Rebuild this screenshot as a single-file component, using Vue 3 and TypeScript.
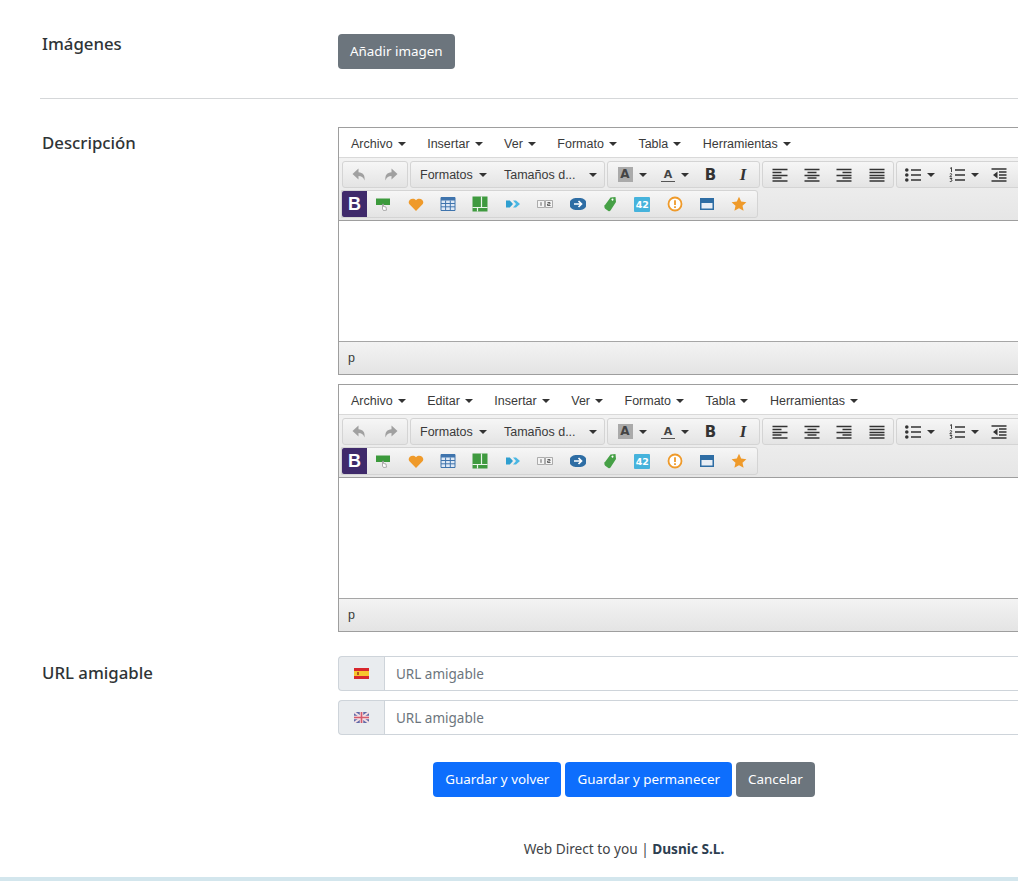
<script setup lang="ts">
interface Shape { d: string; fill?: string; stroke?: string; sw?: number }
interface Tool { w: number; shapes?: Shape[]; text?: string; cls?: string; caret?: boolean }

const g = '#333'
const undo: Shape[] = [{ d: 'M7.500 1.500 1.500 7l6 5.500V9c2.800 0 4.800 1 6 4.500.8-5.200-1.700-8-6-8.200z', fill: '#a0a0a0' }]
const redo: Shape[] = [{ d: 'M8.500 1.500 14.500 7l-6 5.500V9c-2.800 0-4.800 1-6 4.500-.8-5.200 1.700-8 6-8.200z', fill: '#a0a0a0' }]
const left: Shape[] = [{ d: 'M.5 2.500h15M.5 5.500h9M.5 8.500h15M.5 11h9M.5 14h15', stroke: g, sw: 1.500 }]
const center: Shape[] = [{ d: 'M.5 2.500h15M3.500 5.500h9M.5 8.500h15M3.500 11h9M.5 14h15', stroke: g, sw: 1.500 }]
const right: Shape[] = [{ d: 'M.5 2.500h15M6.500 5.500h9M.5 8.500h15M6.500 11h9M.5 14h15', stroke: g, sw: 1.500 }]
const justify: Shape[] = [{ d: 'M.5 2.500h15M.5 5.500h15M.5 8.500h15M.5 11h15M.5 14h15', stroke: g, sw: 1.500 }]
const bullets: Shape[] = [
  { d: 'M0 3a1.800 1.800 0 1 0 3.600 0a1.800 1.800 0 1 0-3.600 0M0 8a1.800 1.800 0 1 0 3.600 0a1.800 1.800 0 1 0-3.600 0M0 13a1.800 1.800 0 1 0 3.600 0a1.800 1.800 0 1 0-3.600 0', fill: g },
  { d: 'M6 3h10M6 8h10M6 13h10', stroke: g, sw: 1.600 }
]
const numbers: Shape[] = [
  { d: 'M1 1.500 2.500.5V5M.8 7c1.500-1 2.500 0 1.500 1L.8 9.800H3M.8 11.500h2.200l-1 1.300c1.500 0 1.500 2.200-1.200 1.700', stroke: g, sw: .9, fill: 'none' },
  { d: 'M6 3h10M6 8h10M6 13h10', stroke: g, sw: 1.600 }
]
const outdent: Shape[] = [
  { d: 'M.5 2h15M8 5h7.500M8 8h7.500M8 11h7.500M.5 14h15', stroke: g, sw: 1.500 },
  { d: 'M6.500 4.500v7L2 8z', fill: g }
]
const indent: Shape[] = [
  { d: 'M.5 2h15M8 5h7.500M8 8h7.500M8 11h7.500M.5 14h15', stroke: g, sw: 1.500 },
  { d: 'M2 4.500v7L6.500 8z', fill: g }
]

const row1: Tool[][] = [
  [{ w: 32, shapes: undo }, { w: 32, shapes: redo }],
  [
    { w: 84, text: 'Formatos', cls: 'drop', caret: true },
    { w: 109, text: 'Tamaños d...', cls: 'drop wide', caret: true }
  ],
  [
    { w: 48, text: 'A', cls: 'hl', caret: true },
    { w: 38, text: 'A', cls: 'fc', caret: true },
    { w: 33, text: 'B', cls: 'bold' },
    { w: 32, text: 'I', cls: 'ital' }
  ],
  [{ w: 33, shapes: left }, { w: 32, shapes: center }, { w: 32, shapes: right }, { w: 33, shapes: justify }],
  [
    { w: 46, shapes: bullets, caret: true },
    { w: 42, shapes: numbers, caret: true },
    { w: 28, shapes: outdent },
    { w: 32, shapes: indent }
  ]
]

const row2: Tool[] = [
  { w: 32.400, shapes: [
    { d: 'M1 2.500h14v6.500H1z', fill: '#3c9a3c' },
    { d: 'M7.500 8v5l1 1.500 3-.3-.5-3.200-2.500-.5V8z', fill: '#fff', stroke: '#8d8d8d', sw: .7 }
  ] },
  { w: 32.400, shapes: [{ d: 'M8 15 1.200 8C-1 4.500 4.500.5 8 4.200c3.500-3.700 9 .3 6.800 3.800z', fill: '#ef9a2a' }] },
  { w: 32.400, shapes: [
    { d: 'M1 1.500h14v13H1z', fill: '#dfe9f5', stroke: '#3f74ad', sw: 1 },
    { d: 'M1 7.500h14M1 10.800h14M5.600 4.500v10M10.300 4.500v10', fill: 'none', stroke: '#3f74ad', sw: 1 },
    { d: 'M1 1.500h14v3H1z', fill: '#3f74ad' }
  ] },
  { w: 32.400, shapes: [
    { d: 'M.5 .5h15v15H.5z', fill: '#3f9a3f' },
    { d: 'M.5 11.500h15M9.500 .5v11M5.500 11.500v4', stroke: '#eaf5ea', sw: 1.200, fill: 'none' }
  ] },
  { w: 32.400, shapes: [
    { d: 'M1 4.500h3.800L8 8l-3.200 3.500H1z', fill: '#2f9fd0' },
    { d: 'M8 4.500h3L15 8l-4 3.500H8L11 8z', fill: '#4bb7e3' }
  ] },
  { w: 32.400, shapes: [
    { d: 'M.5 4.500h7v7h-7zM8.500 4.500h7v7h-7z', fill: '#f4f4f4', stroke: '#9a9a9a', sw: .8 },
    { d: 'M4 6.200v3.600M10.500 6.500h2.500v1.500h-2.500v1.500h3', fill: 'none', stroke: '#555', sw: .9 }
  ] },
  { w: 32.400, shapes: [
    { d: 'M5.500 2h5a6 6 0 0 1 0 12h-5a6 6 0 0 1 0-12z', fill: '#2e6da4' },
    { d: 'M4 8h7M8.500 5l3 3-3 3', fill: 'none', stroke: '#fff', sw: 1.700 }
  ] },
  { w: 32.400, shapes: [
    { d: 'M3 9 8.500 1.500l5-.5.5 5-5.500 8.500c-.6.800-1.400.9-2.100.5l-3.200-2.300c-.8-.6-1-2-.7-3.700z', fill: '#46a046' },
    { d: 'M11.500 3.500a1 1 0 1 0 0 .1', fill: '#fff' }
  ] },
  { w: 32.400, text: '42', cls: 'badge' },
  { w: 32.400, shapes: [
    { d: 'M8 1.500a6.500 6.500 0 1 0 0 13a6.500 6.500 0 1 0 0-13z', fill: '#fff', stroke: '#ef9a2a', sw: 1.800 },
    { d: 'M8 4.300v4.700M8 10.200v1.800', fill: 'none', stroke: '#ef9a2a', sw: 1.800 }
  ] },
  { w: 32.400, shapes: [
    { d: 'M1 2h14v12H1z', fill: '#2e6da4' },
    { d: 'M2.500 7h11v5.500h-11z', fill: '#e8eef5' }
  ] },
  { w: 32.400, shapes: [{ d: 'M8 .8l2.200 4.800 5.200.6-3.900 3.500 1.100 5.100L8 12.200l-4.600 2.600 1.100-5.100L.6 6.200l5.200-.6z', fill: '#ef9a2a' }] }
]

const editors = [
  { id: 'es', menus: ['Archivo', 'Insertar', 'Ver', 'Formato', 'Tabla', 'Herramientas'] },
  { id: 'en', menus: ['Archivo', 'Editar', 'Insertar', 'Ver', 'Formato', 'Tabla', 'Herramientas'] }
]
</script>

<template>
  <div class="page">
    <main class="main">
      <section class="row first">
        <h2 class="label">Imágenes</h2>
        <div><button class="btn grey" type="button">Añadir imagen</button></div>
      </section>
      <hr class="rule" />
      <section class="row desc">
        <h2 class="label">Descripción</h2>
        <div class="editors">
          <div v-for="ed in editors" :key="ed.id" class="editor">
            <nav class="menubar">
              <span v-for="m in ed.menus" :key="m" class="menu">{{ m }}<i class="caret"></i></span>
            </nav>
            <div class="toolbar">
              <div class="tool-row top">
                <div v-for="(grp, gi) in row1" :key="gi" class="group">
                  <span v-for="(t, ti) in grp" :key="ti" class="tool" :style="{ width: t.w + 'px' }">
                    <svg v-if="t.shapes" class="ico" viewBox="0 0 16 16">
                      <path v-for="(s, si) in t.shapes" :key="si" :d="s.d" :fill="s.fill || 'none'" :stroke="s.stroke" :stroke-width="s.sw" />
                    </svg>
                    <span v-if="t.text" :class="t.cls">{{ t.text }}</span>
                    <i v-if="t.caret" class="caret"></i>
                  </span>
                </div>
              </div>
              <div class="tool-row">
                <div class="group second">
                  <span class="logo">B</span>
                  <span v-for="(t, ti) in row2" :key="ti" class="tool" :style="{ width: t.w + 'px' }">
                    <svg v-if="t.shapes" class="ico" viewBox="0 0 16 16">
                      <path v-for="(s, si) in t.shapes" :key="si" :d="s.d" :fill="s.fill || 'none'" :stroke="s.stroke" :stroke-width="s.sw" />
                    </svg>
                    <span v-if="t.text" :class="t.cls">{{ t.text }}</span>
                  </span>
                </div>
              </div>
            </div>
            <div class="area"></div>
            <div class="status">p</div>
          </div>
        </div>
      </section>
      <section class="row url">
        <h2 class="label">URL amigable</h2>
        <div class="inputs">
          <div class="input-group">
            <span class="addon">
              <svg class="flag" viewBox="0 0 15 11">
                <path d="M0 0h15v11H0z" fill="#d8262c" />
                <path d="M0 3h15v5H0z" fill="#f7c52b" />
                <path d="M3 4h2v3H3z" fill="#b5541f" />
              </svg>
            </span>
            <input class="field" type="text" placeholder="URL amigable" />
          </div>
          <div class="input-group">
            <span class="addon">
              <svg class="flag" viewBox="0 0 15 11">
                <path d="M0 0h15v11H0z" fill="#5f6aa8" />
                <path d="M0 0l15 11M15 0 0 11" stroke="#f3dfe3" stroke-width="2" />
                <path d="M7.500 0v11M0 5.500h15" stroke="#f3dfe3" stroke-width="3.500" />
                <path d="M7.500 0v11M0 5.500h15" stroke="#d55a6c" stroke-width="1.600" />
              </svg>
            </span>
            <input class="field" type="text" placeholder="URL amigable" />
          </div>
        </div>
      </section>
      <div class="actions">
        <button class="btn blue" type="button">Guardar y volver</button>
        <button class="btn blue" type="button">Guardar y permanecer</button>
        <button class="btn grey" type="button">Cancelar</button>
      </div>
      <footer class="foot">Web Direct to you | <strong>Dusnic S.L.</strong></footer>
    </main>
    <div class="band"></div>
  </div>
</template>

<style>
html, body { margin: 0; overflow: hidden; background: #fff; }
</style>

<style scoped>
.page {
  width: 1018px;
  height: 881px;
  overflow: hidden;
  display: flex;
  flex-direction: column;
  font-family: "Noto Sans", "Open Sans", sans-serif;
  color: #212529;
}
.main { width: 1168px; flex: none; margin-left: 40px; height: 877px; }
.row { display: grid; grid-template-columns: 298px 1fr; }
.row.first { padding-top: 34px; }
.label { margin: 0; padding-left: 2px; font-size: 16.800px; font-weight: 500; line-height: 20px; color: #2f3436; }
.rule { margin: 29px 0 28px; border: 0; border-top: 1px solid #d5d7d9; }
.btn {
  height: 35px;
  padding: 0 12px;
  border: 0;
  border-radius: 4px;
  color: #fff;
  font: 13.400px/35px "Noto Sans", "Open Sans", sans-serif;
  white-space: nowrap;
}
.grey { background: #6c757d; }
.blue { background: #0d6efd; }
.editors { display: flex; flex-direction: column; gap: 9px; }
.desc .label { margin-top: 6px; }
.editor { border: 1px solid #9e9e9e; height: 248px; box-sizing: border-box; display: flex; flex-direction: column; font-family: "Liberation Sans", Arial, sans-serif; font-size: 12.500px; color: #3a3a3a; }
.menubar { height: 30px; display: flex; align-items: center; padding: 2px 0 0 12px; background: #fff; border-bottom: 1px solid #d9d9d9; flex: none; box-sizing: border-box; }
.menu { display: inline-flex; align-items: center; margin-right: 21.500px; }
.menu .caret { margin-left: 5px; }
.caret { display: inline-block; width: 0; height: 0; border-left: 4px solid transparent; border-right: 4px solid transparent; border-top: 4px solid #333; flex: none; }
.toolbar { height: 63px; background: linear-gradient(#f2f2f2, #e6e6e6); border-bottom: 1px solid #9e9e9e; box-sizing: border-box; flex: none; padding: 3px 0 0 2px; display: flex; flex-direction: column; gap: 2px; }
.tool-row { display: flex; gap: 2px; height: 27px; flex: none; }
.tool-row.top { margin-left: 1px; }
.group { display: flex; align-items: center; border: 1px solid #d4d4d4; border-radius: 3px; background: linear-gradient(#f6f6f6, #e4e4e4); box-sizing: border-box; height: 100%; flex: none; }
.group.second { border-radius: 0 3px 3px 0; height: 28px; padding-right: 1px; }
.tool { display: inline-flex; align-items: center; justify-content: center; height: 100%; box-sizing: border-box; flex: none; }
.ico { width: 16px; height: 16px; flex: none; }
.tool .caret { margin-left: 6px; }
.drop { white-space: nowrap; }
.tool:has(.drop) { justify-content: flex-start; padding-left: 9px; }
.tool:has(.wide) { justify-content: space-between; padding-right: 7px; }
.hl { background: #aaa; font-weight: 700; width: 15px; text-align: center; font-family: "DejaVu Sans", sans-serif; font-size: 12px; line-height: 15px; color: #444; }
.fc { font-weight: 700; border-bottom: 1px solid #555; font-family: "DejaVu Sans", sans-serif; font-size: 11px; line-height: 13px; width: 14px; text-align: center; color: #444; }
.bold { font-weight: 700; font-size: 15px; font-family: "DejaVu Sans", sans-serif; color: #333; }
.ital { font-weight: 700; font-style: italic; font-size: 17px; font-family: "Liberation Serif", serif; color: #333; }
.logo { width: 25px; height: 100%; background: #3f2a6b; color: #fff; font-weight: 700; font-size: 18px; display: flex; align-items: center; justify-content: center; border-radius: 2px 0 0 2px; font-family: "Liberation Sans", sans-serif; flex: none; }
.badge { width: 16px; height: 15px; background: #46b3dc; color: #fff; border-radius: 1px; font-size: 9.500px; font-weight: 700; text-align: center; line-height: 15px; font-family: "DejaVu Sans", sans-serif; }
.area { flex: 1; background: #fff; }
.status { height: 33px; flex: none; box-sizing: border-box; border-top: 1px solid #a6a6a6; padding-left: 9px; line-height: 33px; background: linear-gradient(#f3f3f3, #e4e4e4); }
.url { margin-top: 24px; }
.url .label { margin-top: 7px; }
.inputs { display: flex; flex-direction: column; gap: 9px; }
.input-group { display: flex; height: 35px; }
.addon { width: 46px; box-sizing: border-box; background: #e9ecef; border: 1px solid #ced4da; border-right: 0; border-radius: 4px 0 0 4px; display: flex; align-items: center; justify-content: center; }
.flag { width: 15px; height: 11px; }
.field { flex: 1; min-width: 0; box-sizing: border-box; border: 1px solid #ced4da; padding: 0 11px; font: 13.500px "Noto Sans", "Open Sans", sans-serif; outline: 0; }
.field::placeholder { color: #6c757d; opacity: 1; }
.actions { display: flex; justify-content: center; gap: 4px; margin-top: 27px; }
.foot { text-align: center; margin-top: 42px; font-size: 13.650px; line-height: 20px; color: #3f4447; }
.foot strong { color: #2c3e50; font-weight: 700; }
.band { height: 4px; background: #d3e6ed; flex: none; }
</style>
